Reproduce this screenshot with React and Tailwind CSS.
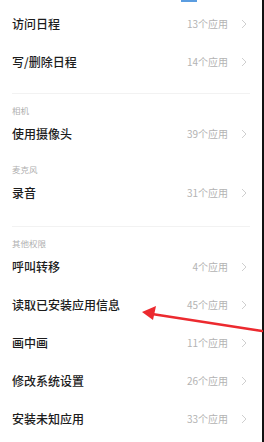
const font = { fontFamily: '"Noto Sans CJK SC", "Noto Sans", sans-serif' };

function Row({ title, count, tall }) {
  return (
    <div className={`flex items-center pl-3 pr-[15px] ${tall ? "h-[39px]" : "h-[38px]"}`}>
      <span className="flex-1 text-[12px] font-medium leading-none text-[#1c1c1c]">{title}</span>
      <span className="text-[10px] leading-none text-[#b3b3b3]">{count}</span>
      <svg width="6" height="10" viewBox="0 0 6 10" className="ml-[13px]">
        <path d="M1 1 L5 5 L1 9" fill="none" stroke="#cfcfcf" strokeWidth="1" />
      </svg>
    </div>
  );
}

function Label({ children, className = "" }) {
  return (
    <div className={`h-[10px] pl-3 text-[8.5px] leading-[10px] text-[#b0b0b0] ${className}`}>{children}</div>
  );
}

function Divider({ className = "" }) {
  return <div className={`mx-3 h-px bg-[#f2f2f2] ${className}`} />;
}

export default function App() {
  return (
    <div className="relative w-[264px] h-[442px] overflow-hidden bg-white" style={font}>
      <div className="h-[442px] w-[262px] border-r-2 border-[#111] box-content">
        <div className="ml-[181px] h-[2px] w-[16px] bg-[#5b9de0]" />
        <div className="mt-[2px]">
          <Row title="访问日程" count="13个应用" tall />
          <Row title="写/删除日程" count="14个应用" />
        </div>
        <Divider className="mt-[12px]" />
        <Label className="mt-[11px]">相机</Label>
        <Row title="使用摄像头" count="39个应用" />
        <Label className="mt-[11px]">麦克风</Label>
        <Row title="录音" count="31个应用" />
        <Divider className="mt-[14px]" />
        <Label className="mt-[11px]">其他权限</Label>
        <Row title="呼叫转移" count="4个应用" />
        <Row title="读取已安装应用信息" count="45个应用" />
        <Row title="画中画" count="11个应用" />
        <Row title="修改系统设置" count="26个应用" />
        <Row title="安装未知应用" count="33个应用" />
      </div>
      <svg className="absolute left-0 top-0" width="264" height="442" viewBox="0 0 264 442">
        <line x1="262" y1="331" x2="152" y2="314" stroke="#ec2a2f" strokeWidth="2.5" strokeLinecap="round" />
        <polygon points="142,312 156,306 153,320" fill="#ec2a2f" />
      </svg>
    </div>
  );
}
